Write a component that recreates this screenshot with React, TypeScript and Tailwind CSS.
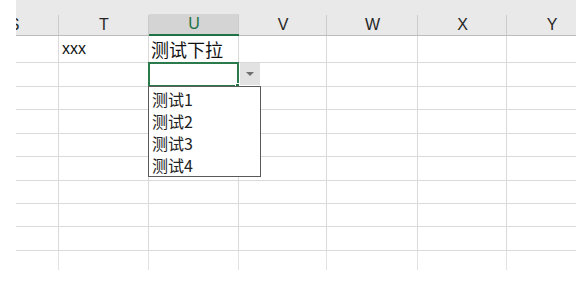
import React from 'react';

const cols = [
  { key: 'S', w: 'w-[90px] -ml-[47px] shrink-0' },
  { key: 'T', w: 'w-[90px] shrink-0' },
  { key: 'U', w: 'w-[90px] shrink-0' },
  { key: 'V', w: 'w-[88px] shrink-0' },
  { key: 'W', w: 'w-[91px] shrink-0' },
  { key: 'X', w: 'w-[89px] shrink-0' },
  { key: 'Y', w: 'w-[90px] shrink-0' },
];

const rowHeights = ['h-[27px]', 'h-[24px]', 'h-[23px]', 'h-[24px]', 'h-[23px]', 'h-[24px]', 'h-[23px]', 'h-[23px]', 'h-[24px]'];

const options = ['测试1', '测试2', '测试3', '测试4'];

// cell with the data validation dropdown open
const DropdownCell: React.FC = () => (
  <div className="relative w-full h-full">
    <div className="absolute -left-px -top-px -right-px -bottom-px border-2 border-[#2a7a4b]">
      <span className="absolute -right-[3px] -bottom-[3px] w-[5px] h-[5px] bg-[#217346] border border-white" />
    </div>
    <div className="absolute left-full top-0 ml-[2px] w-[20px] h-[22px] bg-[#e2e2e2] flex items-center justify-center">
      <svg width="8" height="4" viewBox="0 0 8 4">
        <path d="M0 0 L8 0 L4 4 Z" fill="#6f6f6f" />
      </svg>
    </div>
    <div className="absolute -left-px top-full w-[113px] bg-white border border-[#5a5a5a] pt-[1px] z-10">
      {options.map((o) => (
        <div
          key={o}
          className="h-[22px] flex items-center pl-[3px] text-[16px] text-[#222] font-['Noto_Sans_CJK_SC','Liberation_Sans',sans-serif]"
        >
          {o}
        </div>
      ))}
    </div>
  </div>
);

const renderCell = (r: number, key: string) => {
  if (r === 0 && key === 'T') {
    return <span className="pl-[3px] text-[16px] text-[#111] font-['Liberation_Sans',sans-serif]">xxx</span>;
  }
  if (r === 0 && key === 'U') {
    return <span className="pl-[2px] text-[18px] text-[#111] font-['Noto_Sans_CJK_SC',sans-serif]">测试下拉</span>;
  }
  if (r === 1 && key === 'U') {
    return <DropdownCell />;
  }
  return null;
};

const App: React.FC = () => {
  return (
    <div className="w-[576px] h-[295px] bg-white overflow-hidden font-['Liberation_Sans','Noto_Sans_CJK_SC',sans-serif]">
      <div className="ml-[16px] overflow-hidden">
        {/* top band */}
        <div className="h-[14px] bg-[#e9e9e9]" />

        {/* column headers */}
        <div className="flex h-[22px] bg-[#e9e9e9] border-b border-[#bcbcbc]">
          {cols.map((c) => (
            <div
              key={c.key}
              className={`${c.w} relative flex items-center justify-center text-[16px] ${
                c.key === 'U'
                  ? 'bg-[#d4d4d4] text-[#217346] border-b-2 border-[#217346] -mb-[1px]'
                  : 'text-[#262626]'
              }`}
            >
              {c.key}
              <span className="absolute right-0 top-[1px] bottom-0 w-px bg-[#cbcbcb]" />
            </div>
          ))}
        </div>

        {/* body rows */}
        <div className="pb-[1px]">
          {rowHeights.map((h, r) => (
            <div key={r} className={`flex ${h} border-b border-[#dadada]`}>
              {cols.map((c) => (
                <div key={c.key} className={`${c.w} border-r border-[#dadada] flex items-center`}>
                  {renderCell(r, c.key)}
                </div>
              ))}
            </div>
          ))}
          <div className="flex h-[19px]">
            {cols.map((c) => (
              <div key={c.key} className={`${c.w} border-r border-[#e2e2e2]`} />
            ))}
          </div>
        </div>
      </div>
    </div>
  );
};

export default App;
